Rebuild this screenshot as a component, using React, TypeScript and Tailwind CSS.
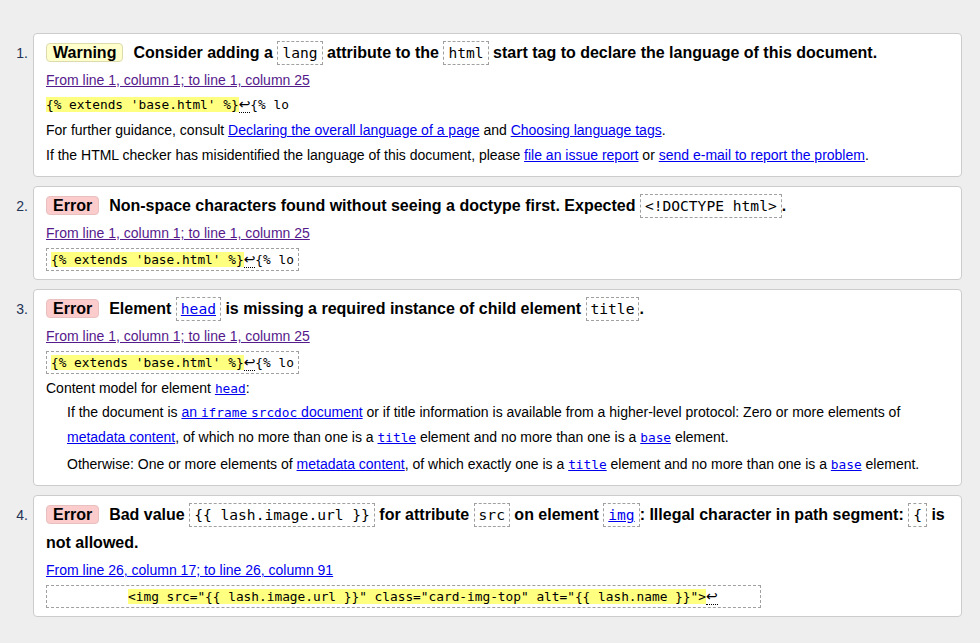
import type { ReactNode } from 'react';

const mono = "font-['DejaVu_Sans_Mono',monospace]";

function Badge({ kind }: { kind: 'warning' | 'error' }) {
  const cls =
    kind === 'warning'
      ? 'bg-[#ffffcc] border-[#dedab0]'
      : 'bg-[#fccccc] border-[#e8c0c0]';
  return (
    <span className={`mr-[10px] inline-block rounded-[4px] border px-[6px] leading-[17px] ${cls}`}>
      {kind === 'warning' ? 'Warning' : 'Error'}
    </span>
  );
}

// inline code inside the bold message line
function HCode({ children, link }: { children: ReactNode; link?: boolean }) {
  return (
    <code
      className={`${mono} inline-block border border-dashed border-[#a0a0a0] px-[4px] py-[1px] text-[14.6px] font-normal leading-[20px] ${
        link ? 'text-[#0000ee] underline' : ''
      }`}
    >
      {children}
    </code>
  );
}

function Code({ children, link }: { children: ReactNode; link?: boolean }) {
  return (
    <code className={`${mono} text-[12.8px] ${link ? 'text-[#0000ee] underline' : ''}`}>{children}</code>
  );
}

function Ret() {
  return (
    <span className="border-b border-dotted border-black font-['DejaVu_Sans',sans-serif] text-[14px]">↩</span>
  );
}

function Extract({ boxed = true, children }: { boxed?: boolean; children: ReactNode }) {
  return (
    <div className={boxed ? 'mt-[2px]' : ''}>
      <code
        className={`${mono} inline-block whitespace-pre text-[12.8px] ${
          boxed ? 'border border-dashed border-[#a0a0a0] px-[4px] leading-[21px]' : 'leading-[23px]'
        }`}
      >
        {children}
      </code>
    </div>
  );
}

function From({ children, visited = true }: { children: ReactNode; visited?: boolean }) {
  return (
    <p className="leading-[26px]">
      <a className={`underline ${visited ? 'text-[#551a8b]' : 'text-[#0000ee]'}`} href="#">
        {children}
      </a>
    </p>
  );
}

function L({ children }: { children: ReactNode }) {
  return (
    <a className="text-[#0000ee] underline" href="#">
      {children}
    </a>
  );
}

function Item({ n, children }: { n: number; children: ReactNode }) {
  return (
    <li className="flex">
      <div className="w-[33px] shrink-0 pr-[5px] pt-[6px] text-right text-[14px] leading-[28px] text-[#223355]">
        {n}.
      </div>
      <div className="min-w-0 flex-1 rounded-[4px] border border-[#cccccc] bg-white px-[12px] pb-[8px] pt-[5px]">
        {children}
      </div>
    </li>
  );
}

function Msg({ children }: { children: ReactNode }) {
  return <p className="text-[16px] font-bold leading-[28px]">{children}</p>;
}

const hl = 'bg-[#ffff80]';

export default function App() {
  return (
    <div className="min-h-screen bg-[#eeeeee] pr-[18px] pt-[33px] font-['Liberation_Sans',Arial,sans-serif] text-[14px] text-black">
      <ol className="flex flex-col gap-[9px]">
        <Item n={1}>
          <Msg>
            <Badge kind="warning" />
            Consider adding a <HCode>lang</HCode> attribute to the <HCode>html</HCode> start tag to declare the
            language of this document.
          </Msg>
          <From>From line 1, column 1; to line 1, column 25</From>
          <Extract boxed={false}>
            <span className={hl}>{"{% extends 'base.html' %}"}</span>
            <Ret />
            {'{% lo'}
          </Extract>
          <p className="mt-[2px] leading-[25px]">
            For further guidance, consult <L>Declaring the overall language of a page</L> and{' '}
            <L>Choosing language tags</L>.
          </p>
          <p className="leading-[25px]">
            If the HTML checker has misidentified the language of this document, please <L>file an issue report</L> or{' '}
            <L>send e-mail to report the problem</L>.
          </p>
        </Item>

        <Item n={2}>
          <Msg>
            <Badge kind="error" />
            Non-space characters found without seeing a doctype first. Expected <HCode>{'<!DOCTYPE html>'}</HCode>.
          </Msg>
          <From>From line 1, column 1; to line 1, column 25</From>
          <Extract>
            <span className={hl}>{"{% extends 'base.html' %}"}</span>
            <Ret />
            {'{% lo'}
          </Extract>
        </Item>

        <Item n={3}>
          <Msg>
            <Badge kind="error" />
            Element <HCode link>head</HCode> is missing a required instance of child element <HCode>title</HCode>.
          </Msg>
          <From>From line 1, column 1; to line 1, column 25</From>
          <Extract>
            <span className={hl}>{"{% extends 'base.html' %}"}</span>
            <Ret />
            {'{% lo'}
          </Extract>
          <dl>
            <dt className="mt-[3px] leading-[22px]">
              Content model for element <Code link>head</Code>:
            </dt>
            <dd className="ml-[21px] leading-[25px]">
              If the document is{' '}
              <L>
                an <Code>iframe</Code> <Code>srcdoc</Code> document
              </L>{' '}
              or if title information is available from a higher-level protocol: Zero or more elements of
              <br />
              <L>metadata content</L>, of which no more than one is a <Code link>title</Code> element and no more than
              one is a <Code link>base</Code> element.
            </dd>
            <dd className="ml-[21px] mt-[2px] leading-[25px]">
              Otherwise: One or more elements of <L>metadata content</L>, of which exactly one is a{' '}
              <Code link>title</Code> element and no more than one is a <Code link>base</Code> element.
            </dd>
          </dl>
        </Item>

        <Item n={4}>
          <Msg>
            <Badge kind="error" />
            Bad value <HCode>{'{{ lash.image.url }}'}</HCode> for attribute <HCode>src</HCode> on element{' '}
            <HCode link>img</HCode>: Illegal character in path segment: <HCode>{'{'}</HCode> is
            <br />
            not allowed.
          </Msg>
          <From visited={false}>From line 26, column 17; to line 26, column 91</From>
          <Extract>
            {'          '}
            <span className={hl}>{'<img src="{{ lash.image.url }}" class="card-img-top" alt="{{ lash.name }}">'}</span>
            <Ret />
            {'     '}
          </Extract>
        </Item>
      </ol>
    </div>
  );
}
